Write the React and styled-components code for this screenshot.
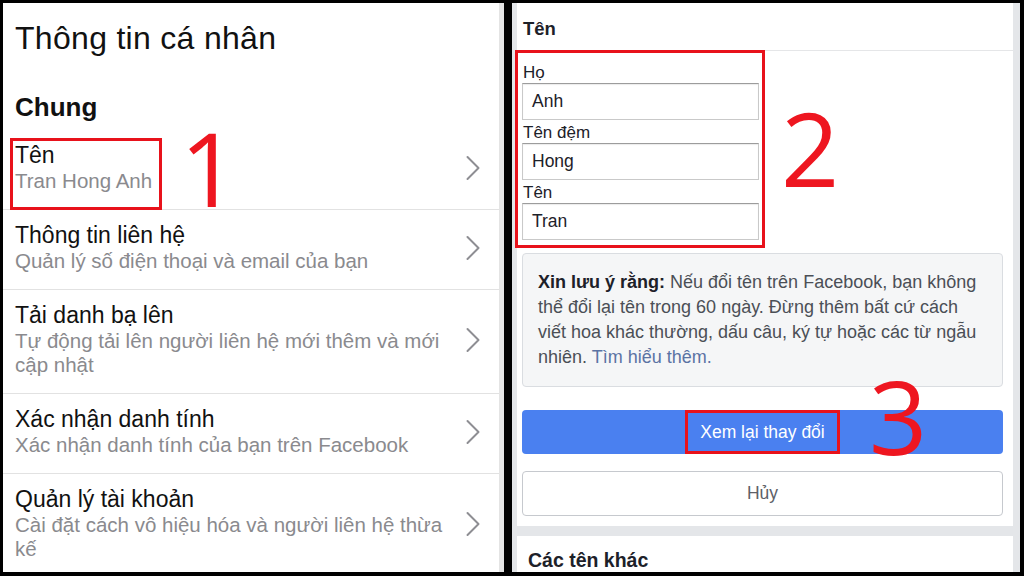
import React from "react";
import styled, { createGlobalStyle } from "styled-components";

const Global = createGlobalStyle`
  html, body { margin: 0; padding: 0; background: #000; }
  body { font-family: "Liberation Sans", Arial, sans-serif; }
  * { box-sizing: border-box; }
`;

const Page = styled.div`
  width: 1024px;
  height: 576px;
  background: #000;
  display: flex;
  gap: 8px;
  padding: 3px 4px 4px 3px;
  overflow: hidden;
`;

const LeftPanel = styled.section`
  position: relative;
  width: 501px;
  flex: none;
  background: #fff;
  border-right: 5px solid #e4e4e4;
  overflow: hidden;
  color: #111;
`;

const Title = styled.h1`
  margin: 17px 0 0 12px;
  font-size: 32px;
  line-height: 36px;
  font-weight: 400;
  letter-spacing: 0.3px;
`;

const Section = styled.h2`
  margin: 36px 0 0 12px;
  font-size: 26px;
  line-height: 30px;
  font-weight: 700;
`;

const List = styled.div`
  margin-top: 8px;
  display: flex;
  flex-direction: column;
`;

const Row = styled.div`
  display: flex;
  align-items: center;
  padding: 13px 17px 16px 12px;
  border-bottom: 1px solid #e2e2e2;
  &:last-child { border-bottom: none; }
`;

const RowText = styled.div`
  width: 437px;
  flex: none;
`;

const RowTitle = styled.div`
  font-size: 23px;
  line-height: 25px;
  color: #111;
`;

const RowSub = styled.div`
  margin-top: 1px;
  font-size: 20.5px;
  line-height: 24px;
  color: #8a8a8e;
`;

const Chevron = styled.svg`
  margin-left: 13px;
  flex: none;
  width: 16px;
  height: 26px;
`;

const RightPanel = styled.section`
  position: relative;
  flex: 1;
  background: #e4e6e9;
  padding: 0 7px 0 5px;
  display: flex;
  flex-direction: column;
  gap: 10px;
  overflow: hidden;
  color: #1d2129;
`;

const Card = styled.div`
  background: #fff;
  display: flex;
  flex-direction: column;
  padding: 0 10px 10px 5px;
  flex: ${(p) => (p.$grow ? 1 : "none")};
`;

const CardHeader = styled.div`
  height: 48px;
  margin: 0 -10px 0 -5px;
  padding: 15px 6px 0;
  font-size: 18.5px;
  line-height: 22px;
  font-weight: 700;
  border-bottom: 1px solid #e5e6e8;
`;

const Form = styled.div`
  padding-top: 12px;
  width: 237px;
  display: flex;
  flex-direction: column;
`;

const Field = styled.div`
  display: flex;
  flex-direction: column;
  & + & { margin-top: 3px; }
`;

const Label = styled.label`
  font-size: 17px;
  line-height: 20px;
  padding-left: 1px;
  color: #1d2129;
`;

const Input = styled.div`
  height: 37px;
  display: flex;
  align-items: center;
  padding-left: 9px;
  font-size: 17.5px;
  color: #1d2129;
  border: 1px solid #c9c9c9;
  border-top-color: #9c9c9c;
  box-shadow: inset 0 1px 1px rgba(0, 0, 0, 0.08);
`;

const Notice = styled.p`
  margin: 13px 0 0;
  background: #f5f6f7;
  border: 1px solid #dadde1;
  border-radius: 4px;
  padding: 16px 24px 16px 15px;
  font-size: 18px;
  line-height: 25px;
  color: #4b4f56;
`;

const Strong = styled.b`
  color: #1d2129;
  font-weight: 700;
`;

const Plain = styled.span``;

const Link = styled.span`
  color: #5b73a4;
`;

const Button = styled.div`
  height: ${(p) => (p.$primary ? "44px" : "45px")};
  margin-top: ${(p) => (p.$primary ? "23px" : "17px")};
  display: flex;
  align-items: center;
  justify-content: center;
  font-size: 17.5px;
  border-radius: 4px;
  background: ${(p) => (p.$primary ? "#4a80f0" : "#fff")};
  color: ${(p) => (p.$primary ? "#fff" : "#5d6168")};
  border: ${(p) => (p.$primary ? "none" : "1px solid #c6c9ce")};
`;

const OtherHeader = styled.div`
  padding: 12px 0 0 6px;
  font-size: 19.5px;
  line-height: 24px;
  font-weight: 700;
  color: #1d2129;
`;

const Mark = styled.div`
  position: absolute;
  left: ${(p) => p.$x}px;
  top: ${(p) => p.$y}px;
  width: ${(p) => p.$w}px;
  height: ${(p) => p.$h}px;
  border: 3px solid #e8121b;
  pointer-events: none;
`;

const Digit = styled.div`
  position: absolute;
  left: ${(p) => p.$x}px;
  top: ${(p) => p.$y}px;
  font-family: "Open Sans", "Liberation Sans", sans-serif;
  font-size: 102px;
  line-height: 0.8;
  color: #ee1620;
  pointer-events: none;
`;

const ChevronIcon = () => (
  <Chevron viewBox="0 0 16 26">
    <path d="M2.5 2 L13.5 13 L2.5 24" fill="none" stroke="#8e8e93" strokeWidth="2" strokeLinecap="round" strokeLinejoin="round" />
  </Chevron>
);

const rows = [
  { t: "Tên", s: "Tran Hong Anh" },
  { t: "Thông tin liên hệ", s: "Quản lý số điện thoại và email của bạn" },
  { t: "Tải danh bạ lên", s: "Tự động tải lên người liên hệ mới thêm và mới cập nhật" },
  { t: "Xác nhận danh tính", s: "Xác nhận danh tính của bạn trên Facebook" },
  { t: "Quản lý tài khoản", s: "Cài đặt cách vô hiệu hóa và người liên hệ thừa kế" },
];

export default function App() {
  return (
    <>
      <Global />
      <Page>
        <LeftPanel>
          <Title>Thông tin cá nhân</Title>
          <Section>Chung</Section>
          <List>
            {rows.map((r) => (
              <Row key={r.t}>
                <RowText>
                  <RowTitle>{r.t}</RowTitle>
                  <RowSub>{r.s}</RowSub>
                </RowText>
                <ChevronIcon />
              </Row>
            ))}
          </List>
          <Mark $x={7} $y={135} $w={152} $h={72} />
          <Digit $x={177} $y={124}>1</Digit>
        </LeftPanel>
        <RightPanel>
          <Card>
            <CardHeader>Tên</CardHeader>
            <Form>
              <Field>
                <Label>Họ</Label>
                <Input>Anh</Input>
              </Field>
              <Field>
                <Label>Tên đệm</Label>
                <Input>Hong</Input>
              </Field>
              <Field>
                <Label>Tên</Label>
                <Input>Tran</Input>
              </Field>
            </Form>
            <Notice>
              <Strong>Xin lưu ý rằng:</Strong>
              <Plain> Nếu đổi tên trên Facebook, bạn không thể đổi lại tên trong 60 ngày. Đừng thêm bất cứ cách viết hoa khác thường, dấu câu, ký tự hoặc các từ ngẫu nhiên. </Plain>
              <Link>Tìm hiểu thêm.</Link>
            </Notice>
            <Button $primary>Xem lại thay đổi</Button>
            <Button>Hủy</Button>
          </Card>
          <Card $grow>
            <OtherHeader>Các tên khác</OtherHeader>
          </Card>
          <Mark $x={3} $y={47} $w={250} $h={198} />
          <Mark $x={173} $y={407} $w={155} $h={44} />
          <Digit $x={269} $y={104}>2</Digit>
          <Digit $x={357} $y={372}>3</Digit>
        </RightPanel>
      </Page>
    </>
  );
}
